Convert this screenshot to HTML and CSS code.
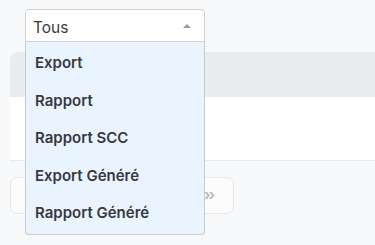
FILE: index.html
```html
<!DOCTYPE html>
<html>
<head>
    <link rel="stylesheet" href="styles.css">
</head>
<body>
    <div class="page">
        <div class="table-card">
            <div class="table-head"></div>
            <div class="table-body"></div>
        </div>
        <div class="pager">
            <span class="pager-next">&rsaquo;&rsaquo;</span>
        </div>
    </div>

    <div class="select">
        <div class="select-box">
            <span class="select-value">Tous</span>
            <span class="caret"></span>
        </div>
        <ul class="select-menu">
            <li>Export</li>
            <li>Rapport</li>
            <li>Rapport SCC</li>
            <li>Export Généré</li>
            <li>Rapport Généré</li>
        </ul>
    </div>
</body>
</html>
```

FILE: styles.css
```css
* {
    box-sizing: border-box;
    margin: 0;
    padding: 0;
}

body {
    font-family: Inter, 'Noto Sans', sans-serif;
    background-color: #f8f9fb;
    color: #333;
    height: 245px;
    overflow: hidden;
}

.page {
    padding: 52px 0 0 10px;
}

.table-card {
    border-radius: 8px 0 0 0;
    overflow: hidden;
}

.table-head {
    height: 45px;
    background-color: #ebecf0;
}

.table-body {
    height: 64px;
    background: white;
    border-bottom: 1px solid #e6e8eb;
}

.pager {
    width: 224px;
    height: 37px;
    margin-top: 16px;
    border: 1px solid #e6e8eb;
    border-radius: 7px;
    background-color: #fcfcfd;
    display: flex;
    align-items: center;
    justify-content: flex-end;
    padding-right: 20px;
}

.pager-next {
    color: #b4b8bf;
    font-size: 15px;
    font-weight: 700;
    letter-spacing: -2px;
    margin-top: -2px;
}

.select {
    position: absolute;
    left: 25px;
    top: 9px;
    width: 180px;
}

.select-box {
    height: 33px;
    background: white;
    border: 1px solid #cfd2d6;
    border-radius: 4px 4px 0 0;
    display: flex;
    align-items: center;
    justify-content: space-between;
    padding: 0 13px 0 7px;
    font-size: 15.5px;
    color: #3a3a3a;
}

.select-value {
    margin-top: 3px;
}

.caret {
    width: 0;
    height: 0;
    border-left: 4px solid transparent;
    border-right: 4px solid transparent;
    border-bottom: 4px solid #9a9a9a;
    margin-top: 1px;
}

.select-menu {
    list-style: none;
    background-color: #eaf4ff;
    border: 1px solid #c7cbd1;
    border-top: none;
    border-radius: 0 0 4px 4px;
    padding: 2px 0 2px;
}

.select-menu li {
    height: 37.5px;
    display: flex;
    align-items: center;
    padding-left: 9px;
    font-size: 15px;
    font-weight: 600;
    color: #363940;
}
```
